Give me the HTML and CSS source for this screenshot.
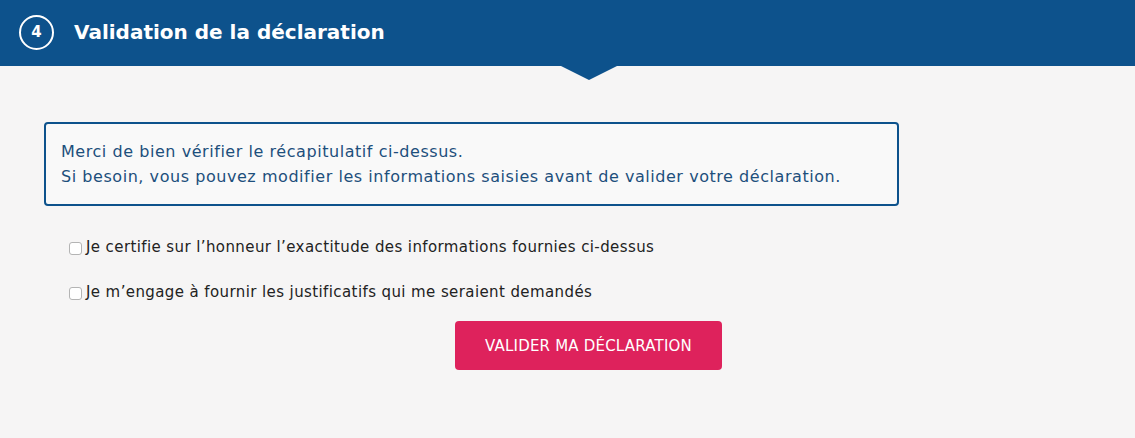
FILE: index.html
```html
<!DOCTYPE html>
<html lang="fr">
<head>
  <meta charset="UTF-8" />
  <meta name="viewport" content="width=device-width, initial-scale=1.0" />
  <title>Validation de la déclaration</title>
  <link rel="stylesheet" href="styles.css">
</head>
<body>

  <!-- Step header -->
  <header class="step-header">
    <span class="step-number">4</span>
    <h2 class="step-title">Validation de la déclaration</h2>
  </header>

  <!-- Step content -->
  <section class="step-content">
    <div class="info-box">
      <p>Merci de bien vérifier le récapitulatif ci-dessus.<br>
      Si besoin, vous pouvez modifier les informations saisies avant de valider votre déclaration.</p>
    </div>

    <ul class="checks">
      <li><label><input type="checkbox"> Je certifie sur l’honneur l’exactitude des informations fournies ci-dessus</label></li>
      <li><label><input type="checkbox"> Je m’engage à fournir les justificatifs qui me seraient demandés</label></li>
    </ul>

    <div class="actions">
      <button class="btn-submit">Valider ma déclaration</button>
    </div>
  </section>

</body>
</html>
```

FILE: styles.css
```css
:root {
  --blue: #0d528c;
  --pink: #de225c;
  --bg: #f6f5f5;
}
body {
  margin: 0;
  font-family: "DejaVu Sans", "Open Sans", sans-serif;
  background-color: var(--bg);
}
/* Header with arrow */
.step-header {
  position: relative;
  height: 66px;
  background-color: var(--blue);
  display: flex;
  align-items: center;
  padding-left: 19px;
  color: #fff;
}
.step-header::after {
  content: "";
  position: absolute;
  left: 561px;
  bottom: -14px;
  border-left: 28px solid transparent;
  border-right: 28px solid transparent;
  border-top: 14px solid var(--blue);
}
.step-number {
  width: 31px;
  height: 31px;
  border: 2px solid #fff;
  border-radius: 50%;
  display: flex;
  align-items: center;
  justify-content: center;
  font-size: 15px;
  font-weight: bold;
  margin-top: -2px;
}
.step-title {
  margin: 0 0 0 20px;
  font-size: 20px;
  font-weight: bold;
  margin-top: -3px;
}
/* Content */
.step-content {
  padding: 56px 0 0 44px;
  width: 855px;
}
.info-box {
  border: 2px solid var(--blue);
  border-radius: 4px;
  background-color: #f9f9f9;
  padding: 15px 14px 15px 15px;
  color: #1d4f7c;
}
.info-box p {
  margin: 0;
  font-size: 16px;
  letter-spacing: 0.55px;
  line-height: 25px;
}
.checks {
  list-style: none;
  margin: 32px 0 0 24px;
  padding: 0;
}
.checks li {
  margin-bottom: 27px;
}
.checks label {
  display: flex;
  align-items: center;
  font-size: 15px;
  letter-spacing: 0.4px;
  color: #222;
}
.checks input {
  appearance: none;
  width: 13px;
  height: 13px;
  margin: 2px 4px 0 1px;
  border: 1px solid #b4b4b4;
  border-radius: 3px;
  background-color: #fff;
}
.checks input:checked {
  background-color: var(--blue);
  border-color: var(--blue);
}
.actions {
  display: flex;
  justify-content: center;
  margin-top: -7px;
  padding-left: 234px;
}
.btn-submit {
  width: 267px;
  height: 49px;
  border: none;
  border-radius: 4px;
  background-color: var(--pink);
  color: #fff;
  font-family: inherit;
  font-size: 15px;
  letter-spacing: 0.2px;
  text-transform: uppercase;
  cursor: pointer;
}
```
